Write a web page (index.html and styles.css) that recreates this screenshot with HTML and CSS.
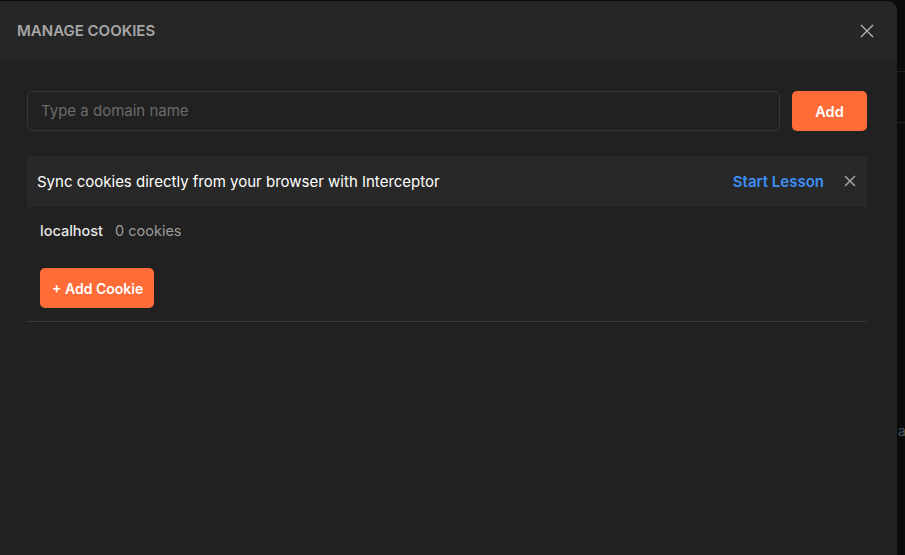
FILE: index.html
```html
<!DOCTYPE html>
<html>
<head>
<meta charset="utf-8">
<link rel="stylesheet" href="styles.css">
</head>
<body>
<div class="page">
  <div class="modal">
    <div class="modal-header">
      <span class="modal-title">MANAGE COOKIES</span>
      <button class="icon-btn close">
        <svg width="16" height="16" viewBox="0 0 16 16"><path d="M2 2 L14 14 M14 2 L2 14" stroke="#b3b3b3" stroke-width="1.4" fill="none"/></svg>
      </button>
    </div>
    <div class="modal-body">
      <div class="domain-row">
        <input class="domain-input" type="text" placeholder="Type a domain name">
        <button class="btn-primary add">Add</button>
      </div>
      <div class="banner">
        <span class="banner-text">Sync cookies directly from your browser with Interceptor</span>
        <a class="banner-link">Start Lesson</a>
        <button class="icon-btn banner-close">
          <svg width="14" height="14" viewBox="0 0 14 14"><path d="M2 2 L12 12 M12 2 L2 12" stroke="#a6a6a6" stroke-width="1.5" fill="none"/></svg>
        </button>
      </div>
      <div class="domain-block">
        <div class="domain-head">
          <span class="domain-name">localhost</span>
          <span class="domain-count">0 cookies</span>
        </div>
        <button class="btn-primary add-cookie">+ Add Cookie</button>
      </div>
    </div>
  </div>
  <div class="backdrop-strip">
    <div class="strip-row r1"></div>
    <div class="strip-row r2"></div>
    <div class="strip-text">a</div>
  </div>
</div>
</body>
</html>
```

FILE: styles.css
```css
* { box-sizing: border-box; }
html, body { margin: 0; padding: 0; }
body {
  background: #0b0b0b;
  font-family: Inter, "Noto Sans", sans-serif;
  width: 905px;
  height: 555px;
  overflow: hidden;
}
.page {
  display: flex;
  height: 555px;
}
.modal {
  width: 897px;
  flex: none;
  margin-top: 1px;
  background: #212121;
  border-top-right-radius: 10px;
  display: flex;
  flex-direction: column;
}
.modal-header {
  height: 60px;
  background: #262626;
  border-top-right-radius: 10px;
  display: flex;
  align-items: center;
  justify-content: space-between;
  padding: 0 22px 1px 17px;
}
.modal-title {
  color: #a6a6a6;
  font-size: 15px;
  font-weight: 600;
}
.icon-btn {
  background: none;
  border: none;
  padding: 0;
  display: flex;
  align-items: center;
  justify-content: center;
  cursor: pointer;
}
.close { width: 16px; height: 16px; }
.modal-body {
  padding: 30px 30px 0 27px;
}
.domain-row {
  display: flex;
  gap: 12px;
}
.domain-input {
  flex: 1;
  height: 40px;
  background: #212121;
  border: 1px solid #363636;
  border-radius: 5px;
  padding: 0 13px 1px;
  font-family: inherit;
  font-size: 15px;
  color: #e6e6e6;
  outline: none;
}
.domain-input::placeholder { color: #6b6b6b; }
.btn-primary {
  background: #ff6c37;
  color: #ffffff;
  border: none;
  border-radius: 5px;
  font-family: inherit;
  font-size: 14px;
  font-weight: 600;
  height: 40px;
  white-space: nowrap;
  cursor: pointer;
}
.add { width: 75px; font-size: 14.5px; }
.banner {
  margin-top: 25px;
  height: 51px;
  background: #282828;
  display: flex;
  align-items: center;
  padding: 0 10px 1px;
}
.banner-text {
  flex: 1;
  color: #ffffff;
  font-size: 15px;
}
.banner-link {
  color: #3d8ff5;
  font-size: 15px;
  font-weight: 600;
}
.banner-close {
  margin-left: 19px;
  margin-right: 0;
  width: 14px;
  height: 14px;
}
.domain-block {
  padding: 14px 0 13px 13px;
  border-bottom: 1px solid #3a3a3a;
}
.domain-head {
  display: flex;
  gap: 12px;
  font-size: 14.5px;
  line-height: 20px;
}
.domain-name { color: #e6e6e6; font-weight: 500; }
.domain-count { color: #9c9c9c; }
.add-cookie {
  display: block;
  margin-top: 27px;
  padding: 0 12px;
  width: 114px;
}
.backdrop-strip {
  flex: 1;
  display: flex;
  flex-direction: column;
}
.strip-row {
  border-bottom: 1px solid #1f1f1f;
}
.r1 { height: 72px; }
.r2 { height: 51px; }
.strip-text {
  margin-top: 299px;
  margin-left: 1px;
  color: #4a5560;
  font-size: 14px;
}
```
